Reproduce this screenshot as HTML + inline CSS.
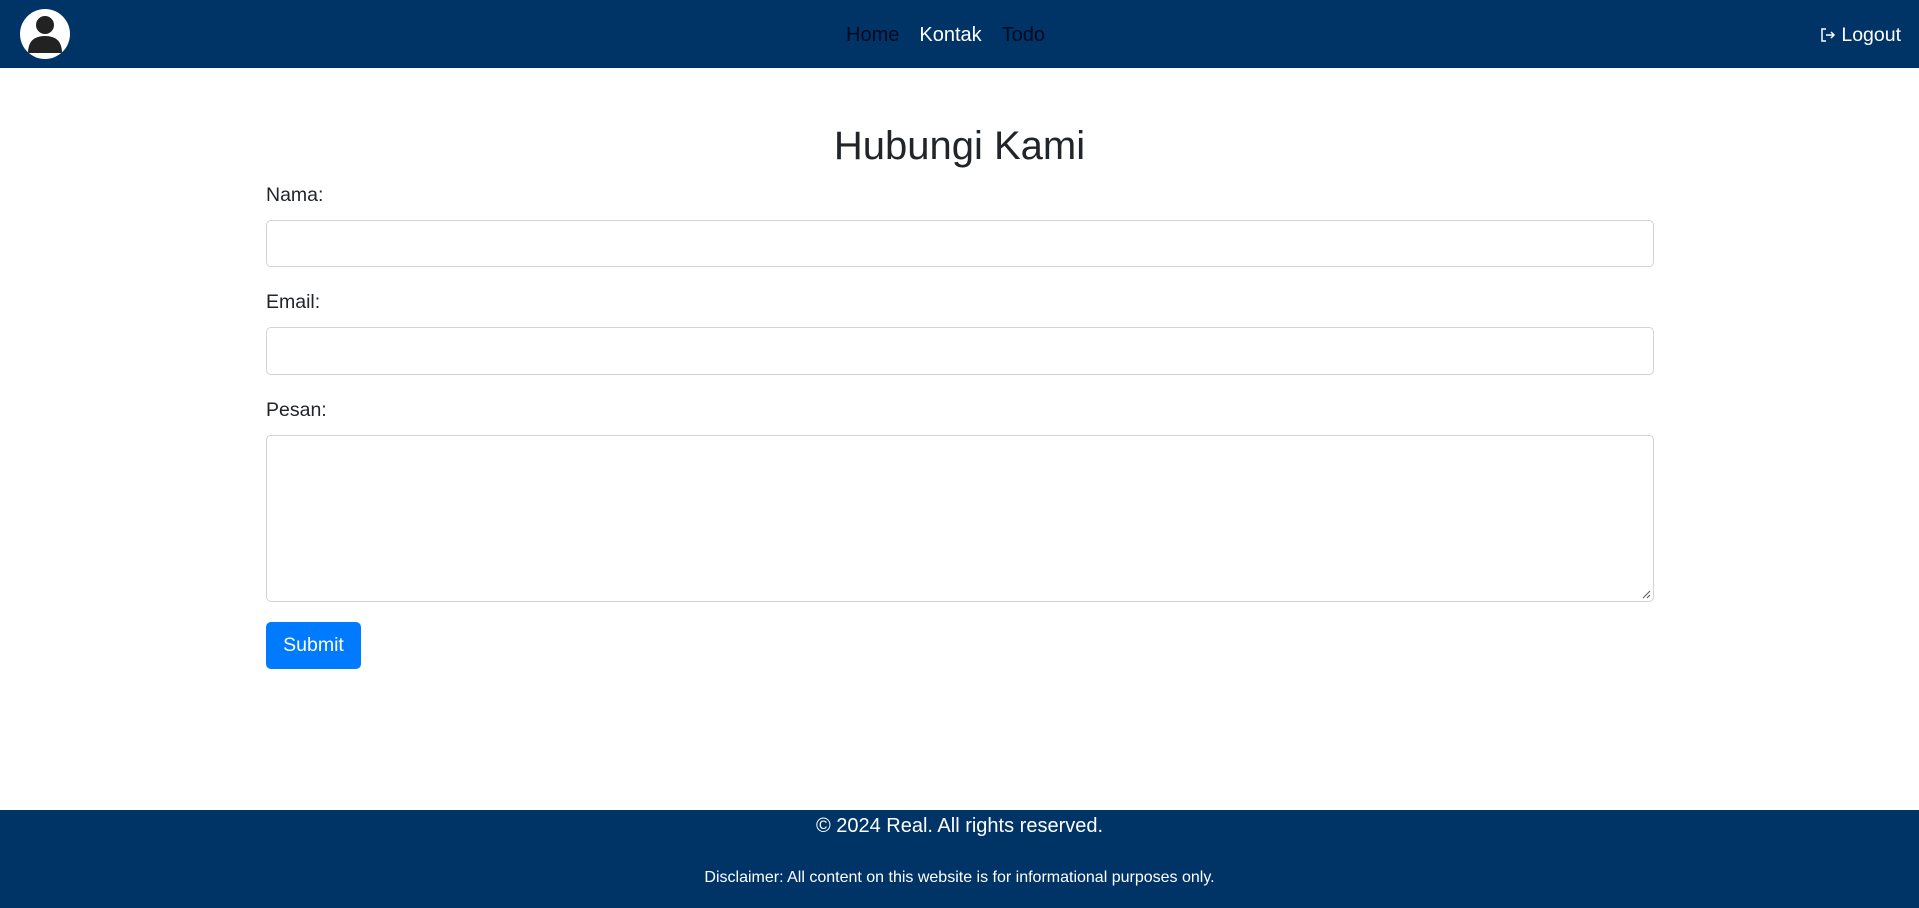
<!DOCTYPE html>
<html><head><style>
*{box-sizing:border-box;margin:0;padding:0}
body{width:1919px;height:908px;font-family:"Liberation Sans",Arial,sans-serif;color:#212529;background:#fff;position:relative;overflow:hidden}
.nav{position:absolute;top:0;left:0;width:1919px;height:68px;background:#003366}
.av{position:absolute;left:20px;top:9px;width:50px;height:50px;border-radius:50%;background:#fff;overflow:hidden}
.links{position:absolute;top:24px;left:846px;font-size:20px;white-space:nowrap}
.links span{margin-right:20px;color:#000a22}
.links .a{color:#fff}
.logout{position:absolute;right:18px;top:24px;color:#fff;font-size:19.5px}
h1{position:absolute;top:122px;width:100%;text-align:center;font-weight:400;font-size:40px;line-height:48px}
label{position:absolute;left:266px;font-size:19.5px}
.in{position:absolute;left:266px;width:1388px;border:1px solid #ced4da;border-radius:5px;background:#fff}
.btn{position:absolute;left:266px;top:622px;width:95px;height:47px;background:#007bff;color:#fff;border-radius:5px;font-size:19.5px;text-align:center;line-height:47px}
.foot{position:absolute;top:810px;left:0;width:1919px;height:98px;background:#003366;color:#fff;text-align:center}
</style></head><body>
<div class="nav">
<div class="av"><svg width="50" height="50" viewBox="0 0 50 50"><circle cx="25" cy="16" r="9" fill="#222"/><path d="M8 44 Q8 27 25 27 Q42 27 42 44 Z" fill="#222"/></svg></div>
<div class="links"><span>Home</span><span class="a">Kontak</span><span>Todo</span></div>
<div class="logout"><svg width="16" height="16" viewBox="0 0 16 16" style="vertical-align:-2px"><path d="M6 2H2v12h4" stroke="#fff" fill="none" stroke-width="1.5"/><path d="M6 8h8M11 5l3 3-3 3" stroke="#fff" fill="none" stroke-width="1.5"/></svg> Logout</div>
</div>
<h1>Hubungi Kami</h1>
<label style="top:184px">Nama:</label>
<div class="in" style="top:220px;height:47px"></div>
<label style="top:291px">Email:</label>
<div class="in" style="top:327px;height:48px"></div>
<label style="top:399px">Pesan:</label>
<div class="in" style="top:435px;height:167px"><svg width="10" height="10" style="position:absolute;right:2px;bottom:2px"><path d="M9 2L2 9M9 6L6 9" stroke="#555" stroke-width="1"/></svg></div>
<div class="btn">Submit</div>
<div class="foot">
<div style="position:absolute;top:5px;width:100%;font-size:20px">© 2024 Real. All rights reserved.</div>
<div style="position:absolute;top:59px;width:100%;font-size:16px">Disclaimer: All content on this website is for informational purposes only.</div>
</div>
</body></html>
